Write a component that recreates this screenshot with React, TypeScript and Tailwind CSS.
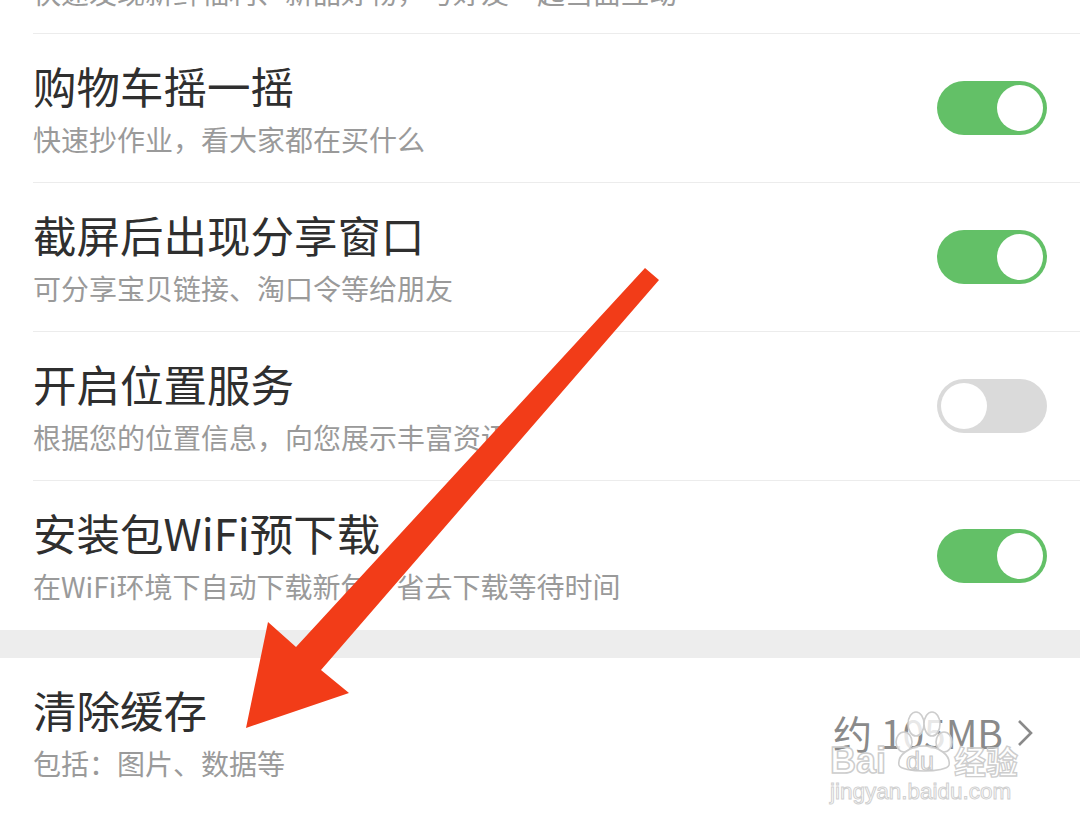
import React from 'react';

type Row = { title: string; desc: string; on: boolean };

const rows: Row[] = [
  { title: '购物车摇一摇', desc: '快速抄作业，看大家都在买什么', on: true },
  { title: '截屏后出现分享窗口', desc: '可分享宝贝链接、淘口令等给朋友', on: true },
  { title: '开启位置服务', desc: '根据您的位置信息，向您展示丰富资讯', on: false },
  { title: '安装包WiFi预下载', desc: '在WiFi环境下自动下载新包，省去下载等待时间', on: true },
];

function Toggle({ on }: { on: boolean }) {
  return (
    <div
      className={
        on
          ? 'flex h-[54px] w-[110px] shrink-0 items-center justify-end rounded-full bg-[#63c067] px-[4px]'
          : 'flex h-[54px] w-[110px] shrink-0 items-center justify-start rounded-full bg-[#dadada] px-[4px]'
      }
    >
      <div className="h-[46px] w-[46px] rounded-full bg-white" />
    </div>
  );
}

function SettingRow({ row, last }: { row: Row; last?: boolean }) {
  return (
    <div className={last ? 'flex h-[149px] items-center pr-[33px]' : 'flex h-[149px] items-center border-b border-[#ececec] pr-[33px]'}>
      <div className="flex-1">
        <div className="text-[43.5px] leading-[43px] text-[#2f2f2f]">{row.title}</div>
        <div className="mt-[18px] text-[28px] leading-[28px] text-[#9a9a9a]">{row.desc}</div>
      </div>
      <Toggle on={row.on} />
    </div>
  );
}

// red annotation arrow drawn over the list
function Arrow() {
  return (
    <svg className="pointer-events-none absolute left-0 top-0" width="1080" height="829" viewBox="0 0 1080 829">
      <polygon
        points="645,268 659,280 321,670 349,693 246,728 268,622 296,647"
        fill="#f23c18"
      />
    </svg>
  );
}

function Watermark() {
  return (
    <div className="pointer-events-none absolute left-[828px] top-[708px] w-[200px] font-['Liberation_Sans',Arial,sans-serif]">
      <div className="relative h-[70px]">
        <span className="absolute left-[2px] top-[35px] text-[36px] font-bold leading-[36px] text-transparent [-webkit-text-stroke:1.5px_#cdcdcd]">
          Bai
        </span>
        <svg className="absolute left-[64px] top-[2px]" width="64" height="64" viewBox="0 0 64 64">
          <g fill="rgba(255,255,255,0.8)" stroke="#cdcdcd" strokeWidth="1.6">
            <ellipse cx="12" cy="32" rx="8" ry="10" />
            <ellipse cx="24" cy="14" rx="8" ry="12" />
            <ellipse cx="40" cy="14" rx="8" ry="12" />
            <ellipse cx="52" cy="32" rx="8" ry="10" />
            <path d="M7 55 C5 45 18 36 32 36 C46 36 59 45 57 55 C55 63 9 63 7 55 Z" />
          </g>
        </svg>
        <span className="absolute left-[78px] top-[41px] text-[25px] leading-[24px] text-transparent [-webkit-text-stroke:1.2px_#c8c8c8]">
          du
        </span>
        <span className="absolute left-[126px] top-[36px] font-['Noto_Sans_CJK_SC',sans-serif] text-[32px] font-bold leading-[32px] text-transparent [-webkit-text-stroke:1.3px_#cdcdcd]">
          经验
        </span>
      </div>
      <div className="mt-[2px] pl-[2px] text-[22.5px] leading-[24px] text-transparent [-webkit-text-stroke:1px_#d0d0d0]">
        jingyan.baidu.com
      </div>
    </div>
  );
}

export default function App() {
  return (
    <div className="relative h-[829px] w-[1080px] overflow-hidden bg-white font-['Noto_Sans_CJK_SC','Noto_Sans',sans-serif]">
      <div className="pl-[33px]">
        <div className="h-[34px] overflow-hidden border-b border-[#ececec]">
          <div className="mt-[-22px] text-[28px] leading-[28px] text-[#9a9a9a]">
            快速发现新鲜福利、新品好物，与好友一起当面互动
          </div>
        </div>
        {rows.map((r, i) => (
          <SettingRow key={r.title} row={r} last={i === rows.length - 1} />
        ))}
      </div>
      <div className="h-[28px] bg-[#ededed]" />
      <div className="flex h-[149px] items-center pl-[33px] pr-[47px]">
        <div className="flex-1">
          <div className="text-[43.5px] leading-[43px] text-[#2f2f2f]">清除缓存</div>
          <div className="mt-[18px] text-[28px] leading-[28px] text-[#9a9a9a]">包括：图片、数据等</div>
        </div>
        <div className="flex items-center gap-[14px]">
          <span className="text-[39px] leading-[39px] text-[#8a8a8a]">约 105MB</span>
          <svg width="16" height="28" viewBox="0 0 16 28">
            <path d="M2 2 L14 14 L2 26" fill="none" stroke="#8a8a8a" strokeWidth="2.6" />
          </svg>
        </div>
      </div>
      <Arrow />
      <Watermark />
    </div>
  );
}
